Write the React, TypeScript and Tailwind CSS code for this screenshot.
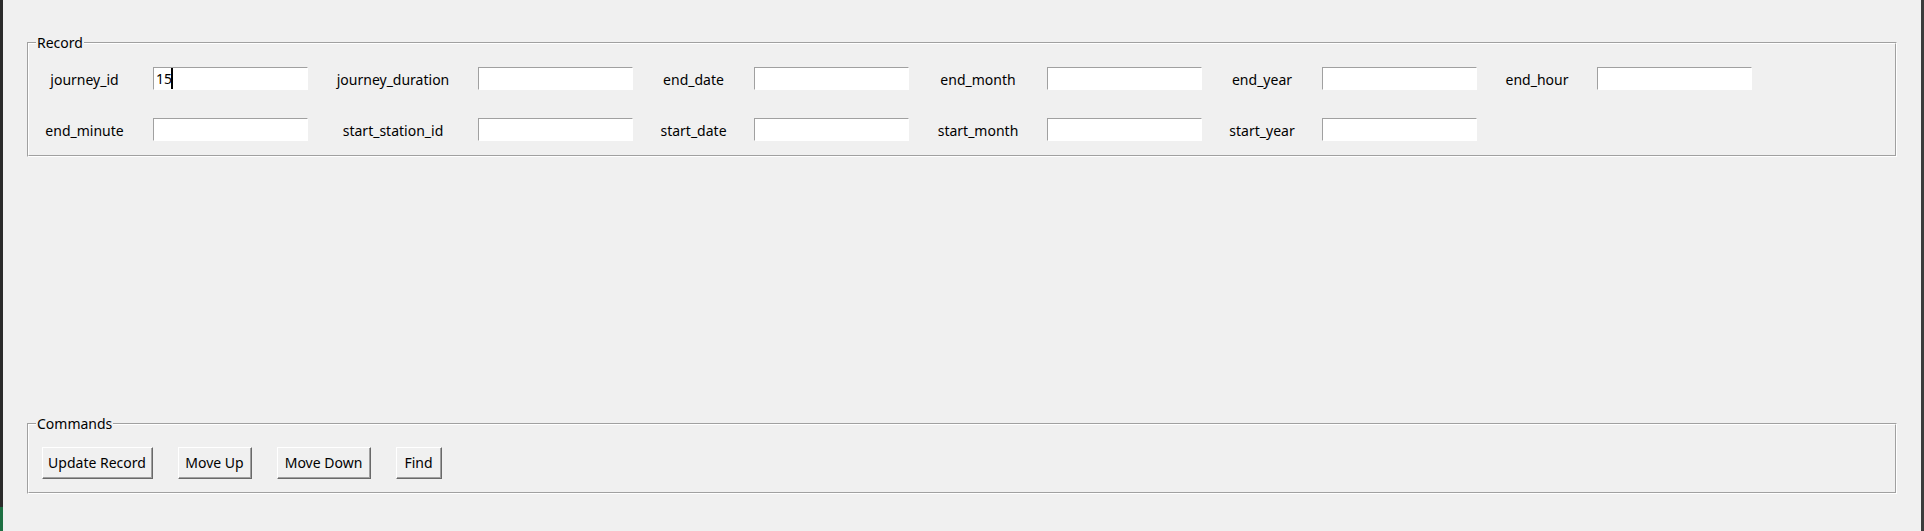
import React from "react";

const font = { fontFamily: '"Noto Sans", "Open Sans", sans-serif' };

function Group({ title, children, className = "" }: { title: string; children: React.ReactNode; className?: string }) {
  return (
    <div className={"relative border-t border-l border-t-[#a0a0a0] border-l-[#a0a0a0] border-b border-r border-b-white border-r-white " + className}>
      <div className="border-t border-l border-t-white border-l-white border-b border-r border-b-[#a0a0a0] border-r-[#a0a0a0]">
        {children}
      </div>
      <div className="absolute left-[8px] top-[-10px] bg-[#f0f0f0] px-px text-[14px] leading-[19px] text-black">{title}</div>
    </div>
  );
}

function Entry({ value, caret }: { value?: string; caret?: boolean }) {
  return (
    <div className="h-[23px] w-[155px] border-t border-l border-t-[#a0a0a0] border-l-[#a0a0a0] border-b border-r border-b-white border-r-white bg-white flex items-center pl-[2px] text-[14px] text-black">
      {value}
      {caret && <span className="ml-[-1px] inline-block h-[21px] w-[2px] bg-black" />}
    </div>
  );
}

function Button({ label, w }: { label: string; w: string }) {
  return (
    <div className={"h-[32px] border-t border-l border-t-white border-l-white border-b border-r border-b-[#696969] border-r-[#696969] " + w}>
      <div className="h-full w-full border-b border-r border-b-[#a0a0a0] border-r-[#a0a0a0] bg-[#f0f0f0] flex items-center justify-center text-[14px] text-black">
        {label}
      </div>
    </div>
  );
}

const row1: [string, string | undefined][] = [
  ["journey_id", "15"],
  ["journey_duration", undefined],
  ["end_date", undefined],
  ["end_month", undefined],
  ["end_year", undefined],
  ["end_hour", undefined],
];
const row2: string[] = ["end_minute", "start_station_id", "start_date", "start_month", "start_year"];

export default function App() {
  return (
    <div className="flex h-[531px] w-[1924px] bg-[#f0f0f0] overflow-hidden" style={font}>
      <div className="flex w-[3px] flex-col bg-[#2b2b2b]">
        <div className="flex-1" />
        <div className="h-[24px] bg-[#1d6f42]" />
      </div>
      <div className="flex flex-1 flex-col px-[24px] pt-[42px]">
        <Group title="Record">
          <div className="grid grid-cols-[124px_155px_170px_155px_121px_155px_138px_155px_120px_155px_120px_155px] gap-y-[28px] pt-[23px] pb-[14px] items-center text-[14px] text-black">
            {row1.map(([l, v], i) => (
              <React.Fragment key={l}>
                <div className={"flex justify-center pt-px " + (i === 0 ? "pr-[13px]" : "")}>{l}</div>
                <Entry value={v} caret={i === 0} />
              </React.Fragment>
            ))}
            {row2.map((l, i) => (
              <React.Fragment key={l}>
                <div className={"flex justify-center pt-px " + (i === 0 ? "pr-[13px]" : "")}>{l}</div>
                <Entry />
              </React.Fragment>
            ))}
          </div>
        </Group>
        <Group title="Commands" className="mt-[266px]">
          <div className="flex gap-[25px] pl-[13px] pt-[22px] pb-[13px]">
            <Button label="Update Record" w="w-[111px]" />
            <Button label="Move Up" w="w-[74px]" />
            <Button label="Move Down" w="w-[94px]" />
            <Button label="Find" w="w-[46px]" />
          </div>
        </Group>
      </div>
      <div className="w-[3px] bg-[#3c3c3c]" />
    </div>
  );
}
